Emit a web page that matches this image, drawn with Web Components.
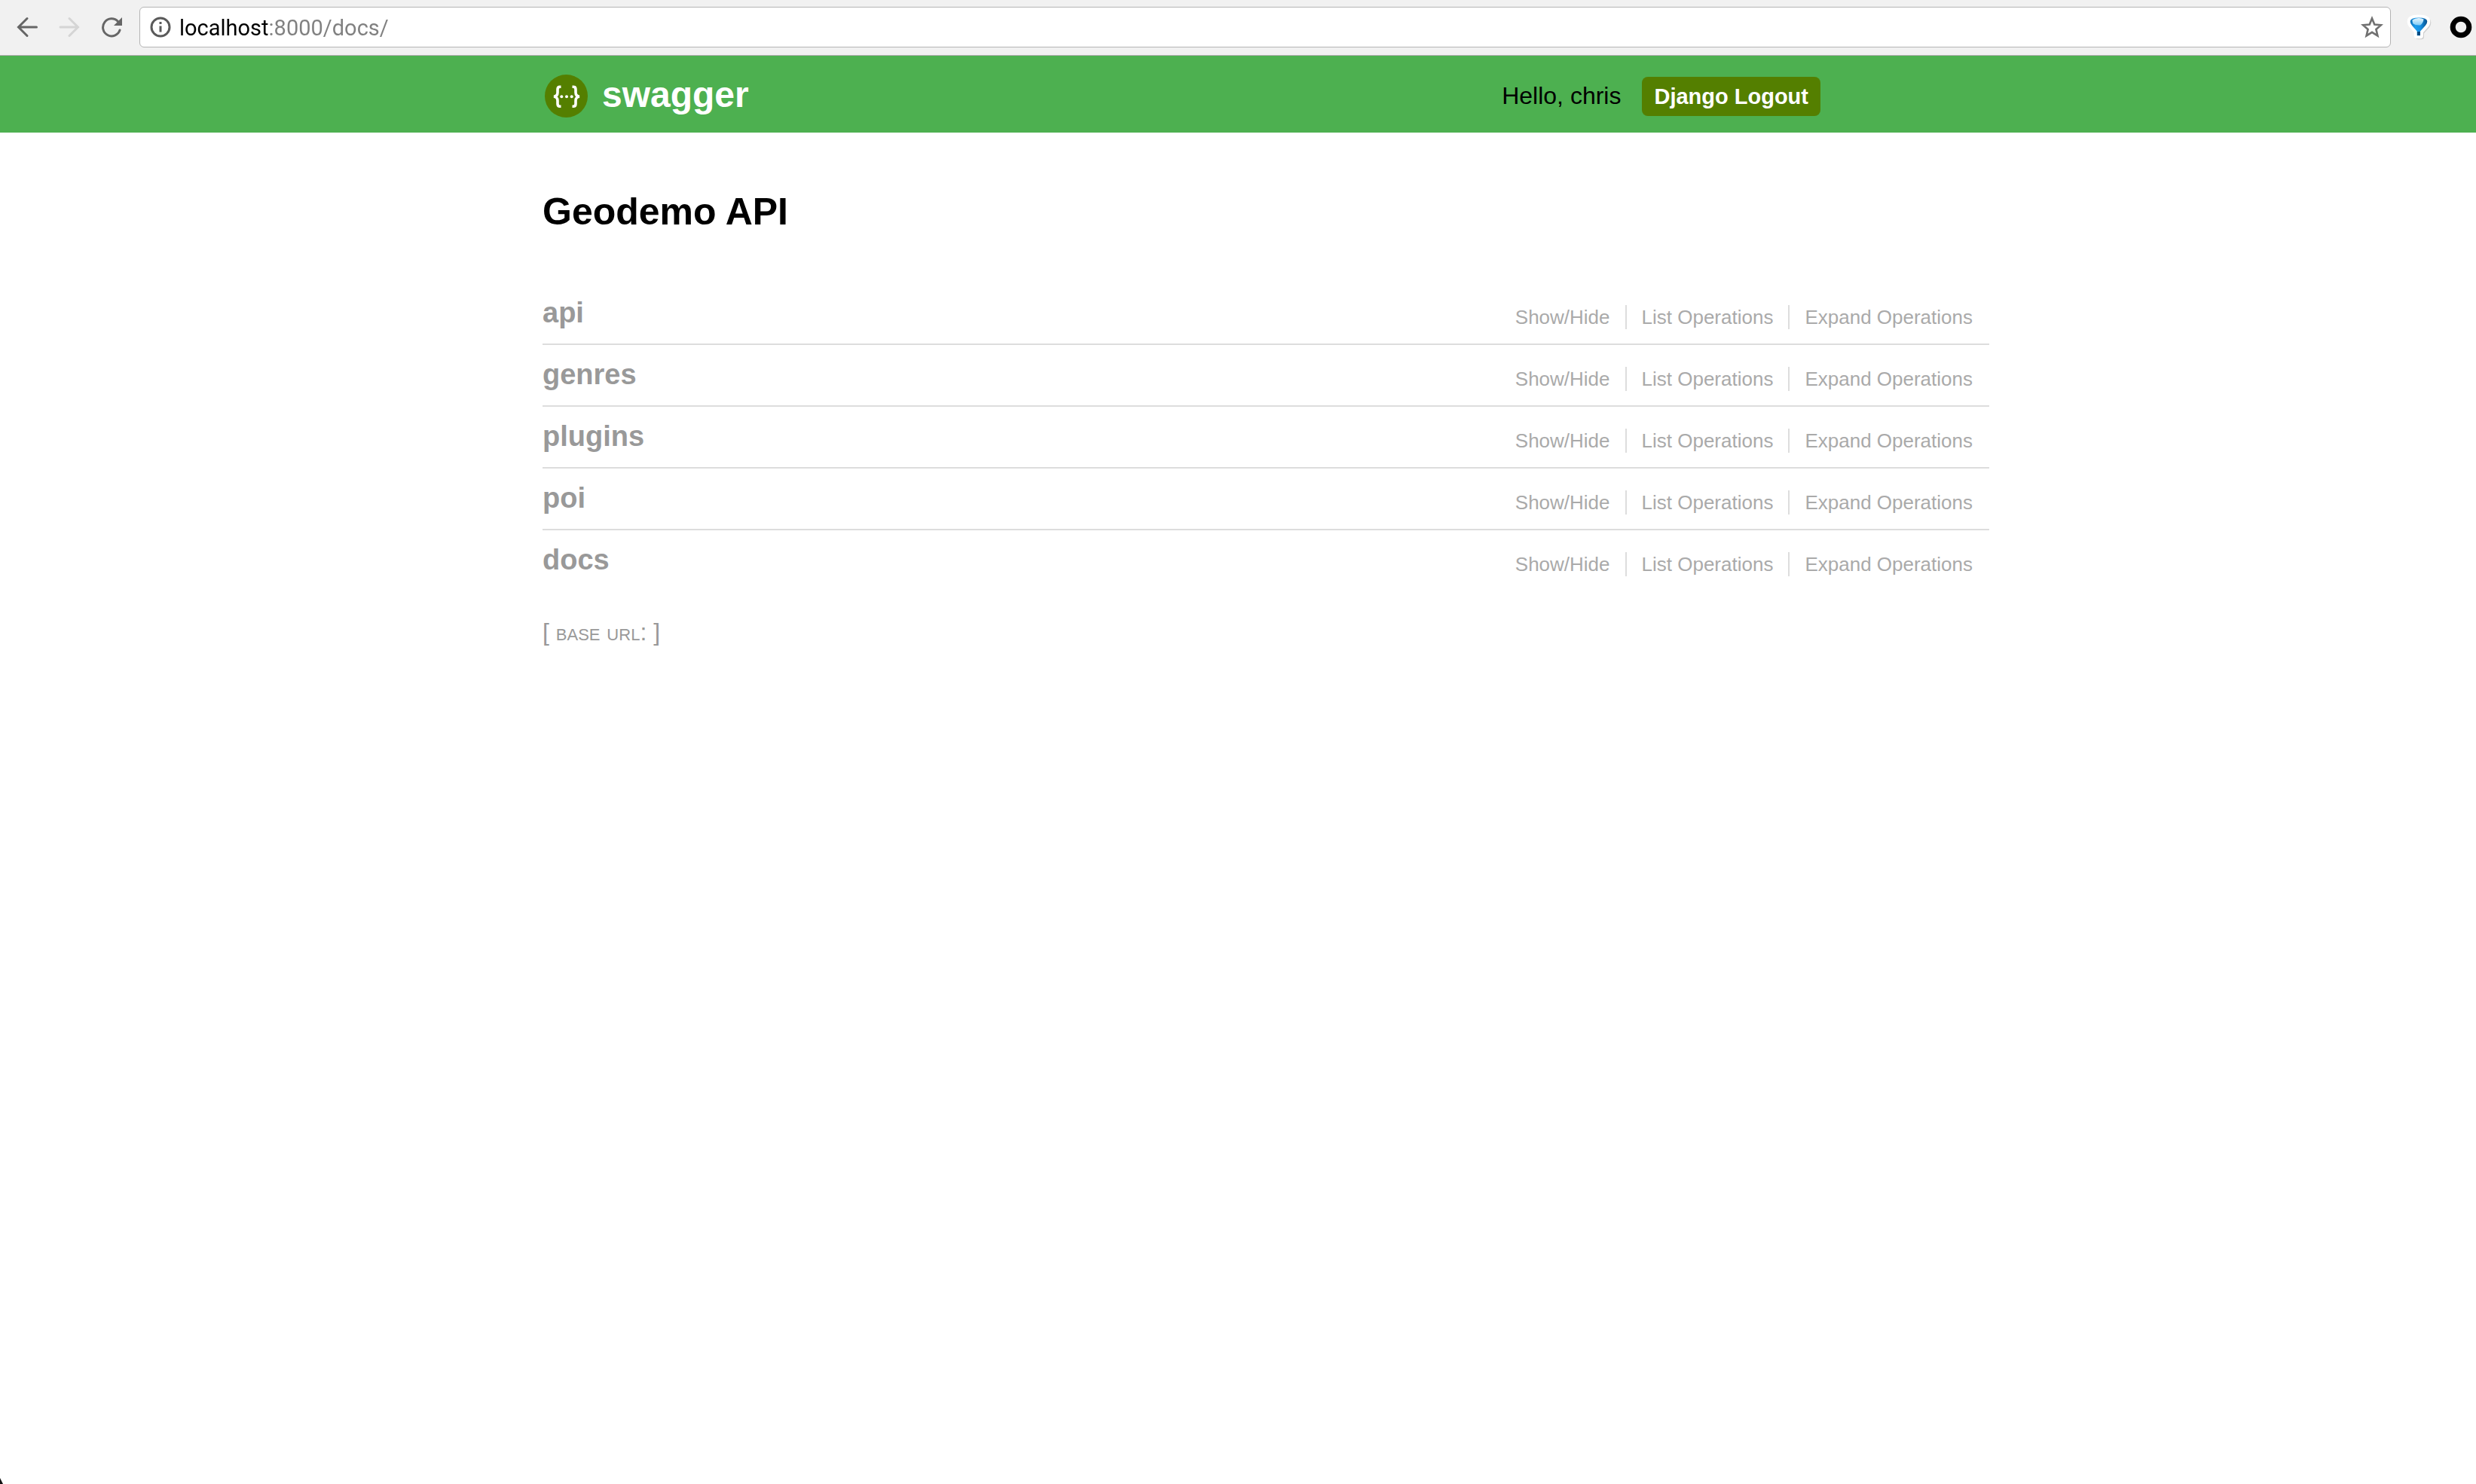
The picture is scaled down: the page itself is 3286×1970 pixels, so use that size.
<!DOCTYPE html>
<html lang="en">
<head>
<meta charset="utf-8">
<title>Geodemo API</title>
<style>
  body { margin: 0; background: #fff; font-family: "Liberation Sans", Arial, sans-serif; }
</style>
</head>
<body>
<docs-page></docs-page>

<template id="toolbar-tpl">
  <style>
    :host { display: flex; align-items: center; box-sizing: border-box; height: 74px; padding: 0 5px 2px 22px; background: #f1f1f1; border-bottom: 1px solid #b5adb2; }
    button { display: block; padding: 0; margin: 0; border: 0; background: none; color: #666; }
    svg { display: block; }
    nav { display: flex; gap: 28px; margin-right: 23px; }
    button:disabled { color: #d5d5d5; }
    .box { flex: 1; display: flex; align-items: center; box-sizing: border-box; height: 54px; padding: 0 9px 0 12px; background: #fff; border: 1px solid #b4b4b4; border-radius: 6px; }
    input { flex: 1; min-width: 0; height: 42px; margin: 0 0 0 10px; padding: 2px 0 0; box-sizing: border-box; border: 0; outline: 0; font: 29px/40px Roboto, sans-serif; color: transparent; background: linear-gradient(90deg, #000 118px, #808080 118px); -webkit-background-clip: text; background-clip: text; }
    .ext { display: flex; align-items: center; gap: 25px; margin-left: 21px; }
  </style>
  <nav aria-label="History">
    <button type="button" aria-label="Back"><svg width="28" height="28" viewBox="0 0 28 28" fill="none" stroke="currentColor" stroke-width="3" stroke-linecap="round"><path d="M26.500 14H3M14 2.500 2.500 14 14 25.500"/></svg></button>
    <button type="button" aria-label="Forward" disabled><svg width="28" height="28" viewBox="0 0 28 28" fill="none" stroke="currentColor" stroke-width="3" stroke-linecap="round"><path d="M2 14h23M14 2.500 25.500 14 14 25.500"/></svg></button>
    <button type="button" aria-label="Reload"><svg width="28" height="28" viewBox="0 0 28 28"><path d="M22.500 6.500A11.500 11.500 0 1 0 25 18" fill="none" stroke="currentColor" stroke-width="3" stroke-linecap="round"/><path d="M28 1v11H17z" fill="currentColor"/></svg></button>
  </nav>
  <div class="box">
    <svg width="30" height="30" viewBox="0 0 30 30" aria-hidden="true"><circle cx="15" cy="15" r="12" fill="none" stroke="#5a5a5a" stroke-width="3"/><path d="M13.500 8h3v3h-3zM13.500 13.500h3v8h-3z" fill="#5a5a5a"/></svg>
    <input type="text" aria-label="Address" value="localhost:8000/docs/" spellcheck="false">
    <button type="button" aria-label="Bookmark"><svg width="30" height="30" viewBox="0 0 30 30"><path d="M15 3.500l3.300 8 8.700.7-6.600 5.700 2 8.500L15 21.800l-7.400 4.600 2-8.500L3 12.200l8.700-.7z" fill="none" stroke="#707070" stroke-width="2.600"/></svg></button>
  </div>
  <div class="ext">
    <button type="button" aria-label="Balloon extension"><svg width="32" height="32" viewBox="0 0 32 32" overflow="visible">
      <defs>
        <linearGradient id="g" x1="0" y1="0" x2="1" y2="0"><stop offset="0" stop-color="#0a6fb8"/><stop offset=".3" stop-color="#1c9cec"/><stop offset=".6" stop-color="#1590e2"/><stop offset="1" stop-color="#07508c"/></linearGradient>
        <linearGradient id="h" x1="0" y1="0" x2="0" y2="1"><stop offset="0" stop-color="#e8f6fd"/><stop offset="1" stop-color="#7fcbf5"/></linearGradient>
      </defs>
      <path id="b" d="M4.700 8.300Q5 3.500 16 3.500T27.300 8.300q0 3.200-2.500 5.700L18 21.500v5.800h-4.300v-5.800L7.200 14Q4.700 11.500 4.700 8.300z" transform="translate(1.500 1.500)" fill="#cfcfcf" stroke="#cfcfcf" stroke-width="7" stroke-linejoin="round"/>
      <path d="M4.700 8.300Q5 3.500 16 3.500T27.300 8.300q0 3.200-2.500 5.700L18 21.500v5.800h-4.300v-5.800L7.200 14Q4.700 11.500 4.700 8.300z" fill="#fff" stroke="#fff" stroke-width="8" stroke-linejoin="round"/>
      <path d="M4.700 8.300Q5 3.500 16 3.500T27.300 8.300q0 3.200-2.500 5.700L18 21.500v5.800h-4.300v-5.800L7.200 14Q4.700 11.500 4.700 8.300z" fill="url(#g)"/>
      <path d="M7.500 6.500Q11 4 16 4q4 0 6.500 1.500-.5 5-4.500 8-6 .5-9.500-2Q7.500 9 7.500 6.500z" fill="url(#h)"/>
      <path d="M14 22h4v5h-4z" fill="#084a80"/>
    </svg></button>
    <button type="button" aria-label="Ring extension"><svg width="30" height="30" viewBox="0 0 30 30"><circle cx="15" cy="15" r="10.800" fill="none" stroke="#000" stroke-width="7"/></svg></button>
  </div>
</template>

<template id="header-tpl">
  <style>
    :host { display: block; height: 102px; background: #4db050; padding-left: 74px; box-sizing: border-box; }
    .wrap { display: flex; justify-content: space-between; align-items: center; box-sizing: border-box; height: 102px; max-width: 1920px; margin: 0 auto; padding: 5px 224px 0 2px; }
    .logo { display: flex; align-items: center; gap: 17px; color: #fff; text-decoration: none; font-weight: bold; font-size: 48px; line-height: 56px; }
    .logo span { padding-bottom: 4px; }
    svg { display: block; }
    .user { display: flex; align-items: center; gap: 28px; font-size: 32px; }
    .out { padding: 0 16px; background: #547f00; border-radius: 8px; color: #fff; font-weight: bold; font-size: 29px; line-height: 52px; text-decoration: none; }
  </style>
  <div class="wrap">
    <a class="logo" href="#">
      <svg width="60" height="60" viewBox="0 0 60 60" aria-hidden="true"><circle cx="29.500" cy="29.500" r="28.500" fill="#547f00"/>
        <g fill="none" stroke="#fff" stroke-width="3.600"><path d="M22.500 17.300h-1.500q-3 0-3 3.500v4q0 5-5 5.500 5 .5 5 5.500v4q0 3.500 3 3.500h1.500M37.500 17.300h1.500q3 0 3 3.500v4q0 5 5 5.500-5 .5-5 5.500v4q0 3.500-3 3.500h-1.500"/></g>
        <g fill="#fff"><circle cx="23.300" cy="30.300" r="2"/><circle cx="30" cy="30.300" r="2"/><circle cx="36.700" cy="30.300" r="2"/></g></svg>
      <span>swagger</span>
    </a>
    <div class="user"><slot></slot><a class="out" href="#">Django Logout</a></div>
  </div>
</template>

<template id="resource-tpl">
  <style>
    :host { display: flex; justify-content: space-between; align-items: flex-start; box-sizing: border-box; height: 82px; border-bottom: 2px solid #ddd; }
    :host(:last-of-type) { border-bottom-color: transparent; }
    h2 { margin: 0; font-size: 38px; line-height: 78px; }
    h2 a { color: #999; text-decoration: none; }
    ul { display: flex; margin: 29px 2px 0 0; padding: 0; list-style: none; font-size: 26px; line-height: 32px; }
    li { padding: 0 20px; border-right: 2px solid #ddd; }
    li:last-child { border-right: 0; }
    li a { color: #aaa; text-decoration: none; }
  </style>
  <h2><a href="#"><slot></slot></a></h2>
  <ul>
    <li><a href="#">Show/Hide</a></li>
    <li><a href="#">List Operations</a></li>
    <li><a href="#">Expand Operations</a></li>
  </ul>
</template>

<template id="page-tpl">
  <style>
    :host { display: flex; flex-direction: column; position: relative; min-height: 100vh; overflow: hidden; }
    main { padding-left: 74px; }
    .wrap { max-width: 1920px; margin: 0 auto; padding-top: 75px; }
    h1 { margin: 0 0 65px; font-size: 50px; line-height: 60px; color: #000; }
    footer { margin-top: 33px; font-size: 32px; line-height: 40px; font-variant: small-caps; color: #999; }
    .corner { position: absolute; left: 0; bottom: 0; display: block; }
  </style>
  <browser-toolbar></browser-toolbar>
  <site-header>Hello, chris</site-header>
  <main><div class="wrap">
    <h1>Geodemo API</h1>
    <section>
      <api-resource>api</api-resource>
      <api-resource>genres</api-resource>
      <api-resource>plugins</api-resource>
      <api-resource>poi</api-resource>
      <api-resource>docs</api-resource>
    </section>
    <footer>[ base url: ]</footer>
  </div></main>
  <svg class="corner" width="4" height="8" viewBox="0 0 4 8" aria-hidden="true"><path d="M0 0 4 8H0z" fill="#111"/></svg>
</template>

<script>
  const define = (name, templateId) => customElements.define(name, class extends HTMLElement {
    constructor() {
      super();
      this.attachShadow({ mode: "open" }).append(document.getElementById(templateId).content.cloneNode(true));
    }
  });
  define("browser-toolbar", "toolbar-tpl");
  define("site-header", "header-tpl");
  define("api-resource", "resource-tpl");
  define("docs-page", "page-tpl");
</script>
</body>
</html>
